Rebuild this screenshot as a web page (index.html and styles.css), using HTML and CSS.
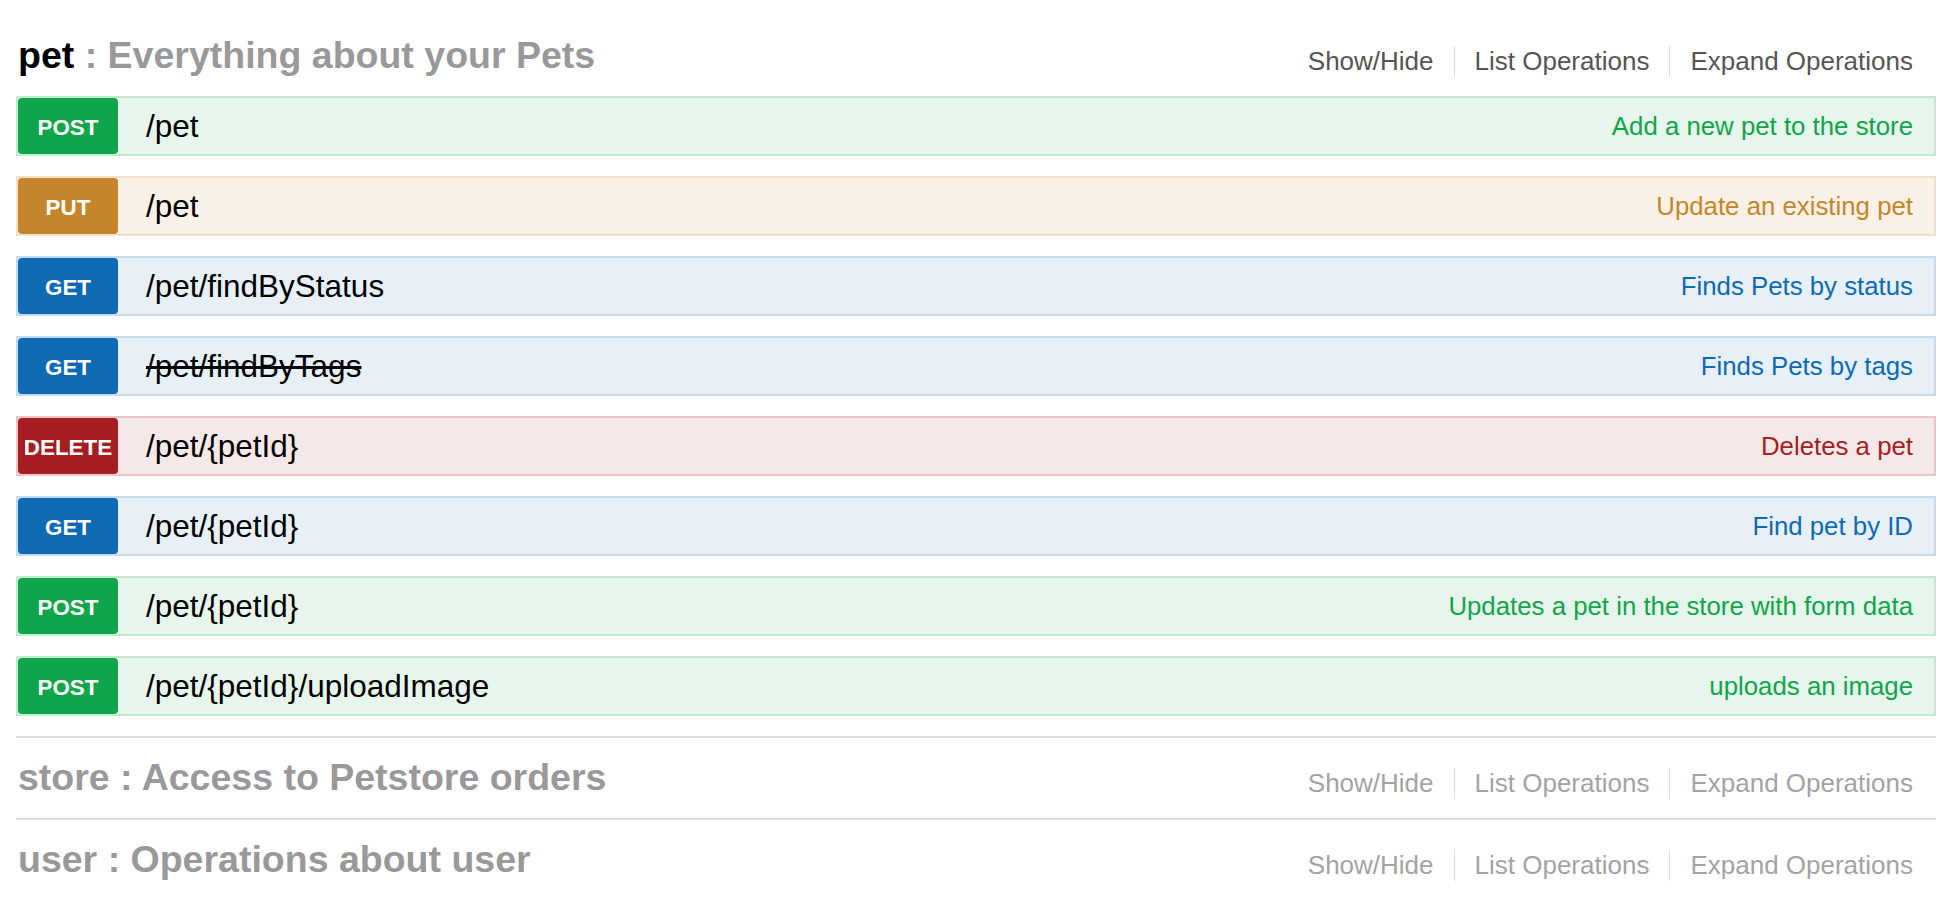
FILE: index.html
```html
<!DOCTYPE html>
<html lang="en">
<head>
<meta charset="utf-8">
<title>Swagger Petstore</title>
<link rel="stylesheet" href="styles.css">
</head>
<body>
<ul class="resources">
  <li class="resource active">
    <div class="heading">
      <h2><span class="tag">pet</span> : Everything about your Pets</h2>
      <ul class="options">
        <li>Show/Hide</li>
        <li>List Operations</li>
        <li>Expand Operations</li>
      </ul>
    </div>
    <ul class="ops">
      <li class="op post"><span class="badge">POST</span><span class="path">/pet</span><span class="desc">Add a new pet to the store</span></li>
      <li class="op put"><span class="badge">PUT</span><span class="path">/pet</span><span class="desc">Update an existing pet</span></li>
      <li class="op get"><span class="badge">GET</span><span class="path">/pet/findByStatus</span><span class="desc">Finds Pets by status</span></li>
      <li class="op get"><span class="badge">GET</span><span class="path deprecated">/pet/findByTags</span><span class="desc">Finds Pets by tags</span></li>
      <li class="op delete"><span class="badge">DELETE</span><span class="path">/pet/{petId}</span><span class="desc">Deletes a pet</span></li>
      <li class="op get"><span class="badge">GET</span><span class="path">/pet/{petId}</span><span class="desc">Find pet by ID</span></li>
      <li class="op post"><span class="badge">POST</span><span class="path">/pet/{petId}</span><span class="desc">Updates a pet in the store with form data</span></li>
      <li class="op post"><span class="badge">POST</span><span class="path">/pet/{petId}/uploadImage</span><span class="desc">uploads an image</span></li>
    </ul>
  </li>
  <li class="resource">
    <div class="heading">
      <h2>store : Access to Petstore orders</h2>
      <ul class="options">
        <li>Show/Hide</li>
        <li>List Operations</li>
        <li>Expand Operations</li>
      </ul>
    </div>
  </li>
  <li class="resource">
    <div class="heading">
      <h2>user : Operations about user</h2>
      <ul class="options">
        <li>Show/Hide</li>
        <li>List Operations</li>
        <li>Expand Operations</li>
      </ul>
    </div>
  </li>
</ul>
</body>
</html>
```

FILE: styles.css
```css
html, body {
  margin: 0;
  padding: 0;
  background: #fff;
}

body {
  font-family: "Liberation Sans", Arial, Helvetica, sans-serif;
  color: #000;
}

.resources {
  list-style: none;
  margin: 0;
  padding: 16px 24px 0 16px;
}

.resource {
  border-bottom: 2px solid #ddd;
}

.resource:last-child {
  border-bottom: none;
}

.heading {
  display: flex;
  justify-content: space-between;
  align-items: flex-start;
  height: 80px;
}

.heading h2 {
  margin: 0;
  padding: 18px 0 0 2px;
  font-size: 37.5px;
  line-height: 42px;
  font-weight: bold;
  color: #999;
  white-space: nowrap;
}

.heading h2 .tag {
  color: #000;
}

.options {
  list-style: none;
  margin: 30px 23px 0 0;
  padding: 0;
  display: flex;
}

.options li {
  font-size: 26px;
  line-height: 31px;
  padding: 0 20px;
  border-right: 1px solid #ddd;
  color: #a3a3a3;
  white-space: nowrap;
}

.active .options li {
  color: #555;
}

.options li:last-child {
  border-right: none;
  padding-right: 0;
}

.ops {
  list-style: none;
  margin: 0;
  padding: 0;
}

.op {
  display: flex;
  align-items: center;
  box-sizing: border-box;
  height: 60px;
  margin-bottom: 20px;
  border: 2px solid;
}

.badge {
  align-self: stretch;
  width: 100px;
  flex: none;
  display: flex;
  align-items: center;
  justify-content: center;
  box-sizing: border-box;
  padding-top: 4px;
  border-radius: 4px;
  color: #fff;
  font-size: 22.4px;
  font-weight: bold;
}

.path {
  flex: 1;
  margin-left: 28px;
  font-size: 31.5px;
  color: #000;
  white-space: nowrap;
}

.path.deprecated {
  text-decoration: line-through;
}

.desc {
  padding-right: 21px;
  font-size: 25.8px;
  white-space: nowrap;
}

.post { background: #e7f6ec; border-color: #c3e8d1; }
.post .badge { background: #10a54a; }
.post .desc { color: #10a54a; }

.put { background: #f9f1e6; border-color: #f0e0ca; }
.put .badge { background: #c5862b; }
.put .desc { color: #c5862b; }

.get { background: #e7f0f7; border-color: #c3d9ec; }
.get .badge { background: #0f6ab4; }
.get .desc { color: #0f6ab4; }

.delete { background: #f5e8e8; border-color: #e8c6c7; }
.delete .badge { background: #a41e22; }
.delete .desc { color: #a41e22; }
```
